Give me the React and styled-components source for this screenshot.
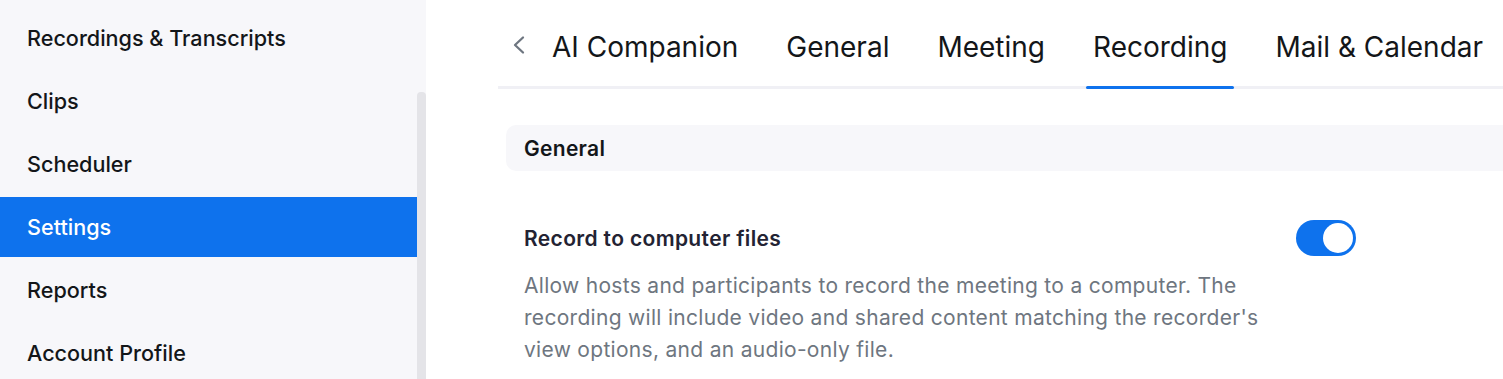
import React from "react";
import styled, { createGlobalStyle } from "styled-components";

const Global = createGlobalStyle`
  html, body { margin: 0; padding: 0; background: #fff; }
  body { font-family: Inter, "Noto Sans", sans-serif; color: #131619; }
  * { box-sizing: border-box; }
`;

const Page = styled.div`
  display: flex;
  width: 1503px;
  height: 379px;
  overflow: hidden;
`;

const Sidebar = styled.nav`
  position: relative;
  width: 426px;
  flex: none;
  background: #f7f7fa;
  padding-top: 8px;
  display: flex;
  flex-direction: column;
  gap: 3px;
`;

const ScrollTrack = styled.div`
  position: absolute;
  left: 417px;
  top: 92px;
  bottom: 0;
  width: 9px;
  border-radius: 4px 4px 0 0;
  background: #e4e4e8;
`;

const NavItem = styled.div`
  flex: none;
  width: 417px;
  height: 60px;
  display: flex;
  align-items: center;
  padding-left: 27px;
  font-size: 21.6px;
  font-weight: 500;
  color: ${(p) => (p.$active ? "#fff" : "#131619")};
  background: ${(p) => (p.$active ? "#0e72ed" : "transparent")};
`;

const Main = styled.main`
  flex: 1;
  padding-left: 72px;
  display: flex;
  flex-direction: column;
`;

const TabBar = styled.div`
  flex: none;
  height: 89px;
  display: flex;
  align-items: stretch;
  border-bottom: 3px solid #f0f0f5;
`;

const Chevron = styled.div`
  width: 47px;
  display: flex;
  align-items: center;
  padding-left: 14px;
  padding-top: 3px;
`;

const Tabs = styled.div`
  display: flex;
  gap: 34px;
`;

const Tab = styled.div`
  position: relative;
  padding: 7px 7px 0;
  display: flex;
  align-items: center;
  font-size: 28px;
  font-weight: 400;
  white-space: nowrap;
  color: #131619;
  &::after {
    content: "";
    position: absolute;
    left: 0;
    right: 0;
    bottom: -3px;
    height: 3px;
    border-radius: 2px;
    background: ${(p) => (p.$active ? "#0e72ed" : "transparent")};
  }
`;

const Content = styled.div`
  padding-top: 36px;
  padding-left: 8px;
`;

const SectionHeader = styled.div`
  height: 46px;
  border-radius: 10px 0 0 10px;
  background: #f7f7fa;
  display: flex;
  align-items: center;
  padding-left: 18px;
  font-size: 21px;
  letter-spacing: 0.3px;
  font-weight: 600;
  color: #131619;
`;

const SettingRow = styled.div`
  display: grid;
  grid-template-columns: 772px auto;
  padding-left: 18px;
  padding-top: 50px;
`;

const SettingText = styled.div`
  display: flex;
  flex-direction: column;
`;

const SettingTitle = styled.div`
  font-size: 21px;
  letter-spacing: 0.35px;
  font-weight: 600;
  line-height: 32px;
  color: #232333;
  margin-top: 2px;
`;

const SettingDesc = styled.div`
  margin-top: 15px;
  font-size: 21px;
  letter-spacing: 0.3px;
  line-height: 32px;
  color: #6e7680;
  width: 748px;
`;

const Toggle = styled.div`
  width: 60px;
  height: 36px;
  border-radius: 18px;
  background: #0e72ed;
  display: flex;
  align-items: center;
  justify-content: flex-end;
  padding-right: 3px;
  margin-top: -1px;
  &::after {
    content: "";
    width: 30px;
    height: 30px;
    border-radius: 50%;
    background: #fff;
  }
`;

const navItems = [
  "Recordings & Transcripts",
  "Clips",
  "Scheduler",
  "Settings",
  "Reports",
  "Account Profile",
];

const tabs = ["AI Companion", "General", "Meeting", "Recording", "Mail & Calendar"];

export default function App() {
  return (
    <Page>
      <Global />
      <Sidebar>
        {navItems.map((n) => (
          <NavItem key={n} $active={n === "Settings"}>
            {n}
          </NavItem>
        ))}
        <ScrollTrack />
      </Sidebar>
      <Main>
        <TabBar>
          <Chevron>
            <svg width="14" height="20" viewBox="0 0 14 20" fill="none">
              <path d="M11 2.5L3 10l8 7.5" stroke="#6e7680" strokeWidth="2.3" strokeLinecap="round" strokeLinejoin="round" />
            </svg>
          </Chevron>
          <Tabs>
            {tabs.map((t) => (
              <Tab key={t} $active={t === "Recording"}>
                {t}
              </Tab>
            ))}
          </Tabs>
        </TabBar>
        <Content>
          <SectionHeader>General</SectionHeader>
          <SettingRow>
            <SettingText>
              <SettingTitle>Record to computer files</SettingTitle>
              <SettingDesc>
                Allow hosts and participants to record the meeting to a computer. The recording will include video and shared content matching the recorder's view options, and an audio-only file.
              </SettingDesc>
            </SettingText>
            <Toggle />
          </SettingRow>
        </Content>
      </Main>
    </Page>
  );
}
